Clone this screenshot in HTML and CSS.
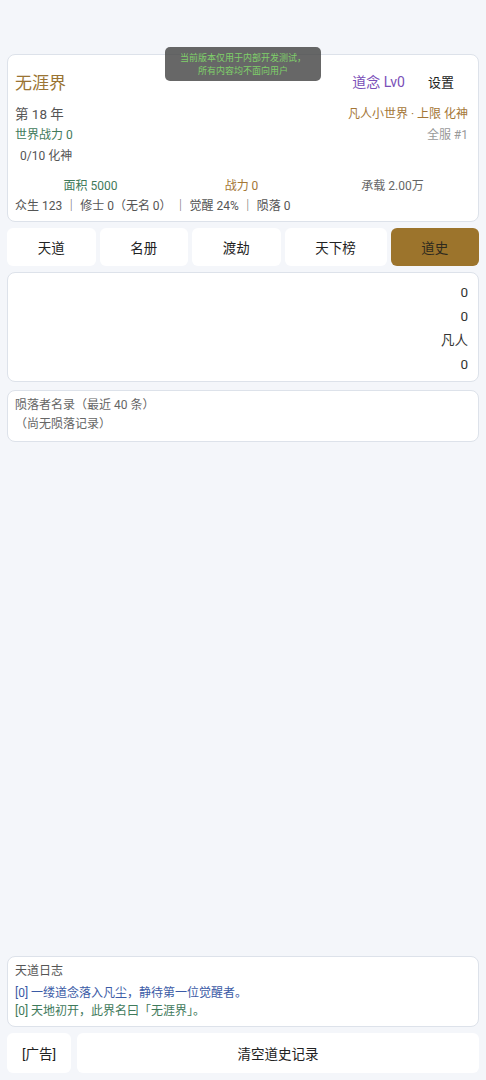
FILE: index.html
```html
<!DOCTYPE html>
<html lang="zh-CN">
<head>
  <meta charset="UTF-8">
  <meta name="viewport" content="width=device-width, initial-scale=1.0">
  <title>无涯界</title>
  <link rel="stylesheet" href="styles.css">
</head>
<body>
  <div class="app">
    <!-- 世界信息 -->
    <div class="card world">
      <div class="world-head">
        <span class="world-name">无涯界</span>
        <div class="head-right">
          <span class="daonian">道念 Lv0</span>
          <span class="settings">设置</span>
        </div>
      </div>
      <div class="row">
        <span class="year">第 18 年</span>
        <span class="tier">凡人小世界 · 上限 化神</span>
      </div>
      <div class="row">
        <span class="power">世界战力 0</span>
        <span class="rank">全服 #1</span>
      </div>
      <div class="row">
        <span class="progress">0/10 化神</span>
      </div>
      <div class="stats">
        <span class="stat green">面积 5000</span>
        <span class="stat gold">战力 0</span>
        <span class="stat grey">承载 2.00万</span>
      </div>
      <div class="summary">众生 123 ｜ 修士 0（无名 0） ｜ 觉醒 24% ｜ 陨落 0</div>
    </div>

    <!-- 标签 -->
    <div class="tabs">
      <div class="tab">天道</div>
      <div class="tab">名册</div>
      <div class="tab">渡劫</div>
      <div class="tab">天下榜</div>
      <div class="tab active">道史</div>
    </div>

    <div class="card values">
      <div class="value">0</div>
      <div class="value">0</div>
      <div class="value">凡人</div>
      <div class="value">0</div>
    </div>

    <div class="card fallen">
      <div class="muted">陨落者名录（最近 40 条）</div>
      <div class="muted">（尚无陨落记录）</div>
    </div>

    <div class="spacer"></div>

    <div class="card log">
      <div class="log-title">天道日志</div>
      <div class="log-line blue">[0] 一缕道念落入凡尘，静待第一位觉醒者。</div>
      <div class="log-line green">[0] 天地初开，此界名曰「无涯界」。</div>
    </div>

    <div class="actions">
      <div class="btn ad">[广告]</div>
      <div class="btn clear">清空道史记录</div>
    </div>

    <div class="toast">当前版本仅用于内部开发测试，<br>所有内容均不面向用户</div>
  </div>
</body>
</html>
```

FILE: styles.css
```css
* {
  box-sizing: border-box;
}
body {
  margin: 0;
  background-color: #f4f6fa;
  color: #333;
  font-family: Roboto, "Noto Sans CJK SC", sans-serif;
}
.app {
  position: relative;
  min-height: 1080px;
  padding: 54px 7px 7px;
  display: flex;
  flex-direction: column;
}
.card {
  background-color: #fff;
  border: 1px solid #dde2ea;
  border-radius: 8px;
}
.world {
  padding: 10px 10px 5px 7px;
}
.world-head {
  height: 32px;
  display: flex;
  align-items: center;
  justify-content: space-between;
}
.world-name {
  font-size: 17px;
  color: #9a7433;
}
.head-right {
  display: flex;
  align-items: center;
}
.daonian {
  font-size: 14px;
  color: #7a4fb8;
}
.settings {
  font-size: 13px;
  color: #222;
  margin-left: 23px;
  margin-right: 14px;
}
.row {
  display: flex;
  justify-content: space-between;
  line-height: 21px;
  font-size: 12px;
}
.world-head + .row {
  margin-top: 7px;
}
.year {
  font-size: 13.5px;
  color: #555;
}
.tier {
  color: #a47636;
}
.power {
  color: #3f7a5b;
}
.rank {
  color: #999;
}
.progress {
  color: #555;
  padding-left: 5px;
}
.stats {
  display: grid;
  grid-template-columns: 1fr 1fr 1fr;
  margin-top: 9px;
  line-height: 20px;
  font-size: 12px;
  text-align: center;
}
.green {
  color: #3f7a5b;
}
.gold {
  color: #a47636;
}
.grey {
  color: #666;
}
.blue {
  color: #3b5ba6;
}
.summary {
  font-size: 12px;
  line-height: 20px;
  color: #555;
}
.tabs {
  display: flex;
  gap: 4px;
  margin-top: 6px;
}
.tab {
  flex: 1 1 auto;
  height: 38px;
  background-color: #fff;
  border-radius: 6px;
  display: flex;
  align-items: center;
  justify-content: center;
  font-size: 13.5px;
  color: #222;
}
.tab.active {
  background-color: #9c742c;
  color: #2e2a1e;
}
.values {
  margin-top: 6px;
  padding: 7px 10px 5px;
}
.value {
  text-align: right;
  font-size: 13.5px;
  line-height: 24px;
  color: #333;
}
.fallen {
  margin-top: 8px;
  padding: 5px 7px 7px;
}
.muted {
  font-size: 12px;
  line-height: 19px;
  color: #666;
}
.spacer {
  flex: 1;
}
.log {
  padding: 5px 7px 6px;
}
.log-title {
  font-size: 12px;
  line-height: 19px;
  color: #555;
  margin-bottom: 3px;
}
.log-line {
  font-size: 12px;
  line-height: 18px;
}
.actions {
  display: flex;
  gap: 6px;
  margin-top: 6px;
}
.btn {
  height: 40px;
  background-color: #fff;
  border-radius: 6px;
  display: flex;
  align-items: center;
  justify-content: center;
  font-size: 13.5px;
  color: #222;
}
.ad {
  width: 64px;
}
.clear {
  flex: 1;
}
.toast {
  position: absolute;
  top: 47px;
  left: 165px;
  width: 156px;
  height: 34px;
  padding-top: 4px;
  background-color: rgba(70, 70, 70, 0.82);
  border-radius: 5px;
  color: #7fd06a;
  font-family: "Noto Sans CJK SC", serif;
  font-size: 9px;
  line-height: 13px;
  text-align: center;
  white-space: nowrap;
}
```
